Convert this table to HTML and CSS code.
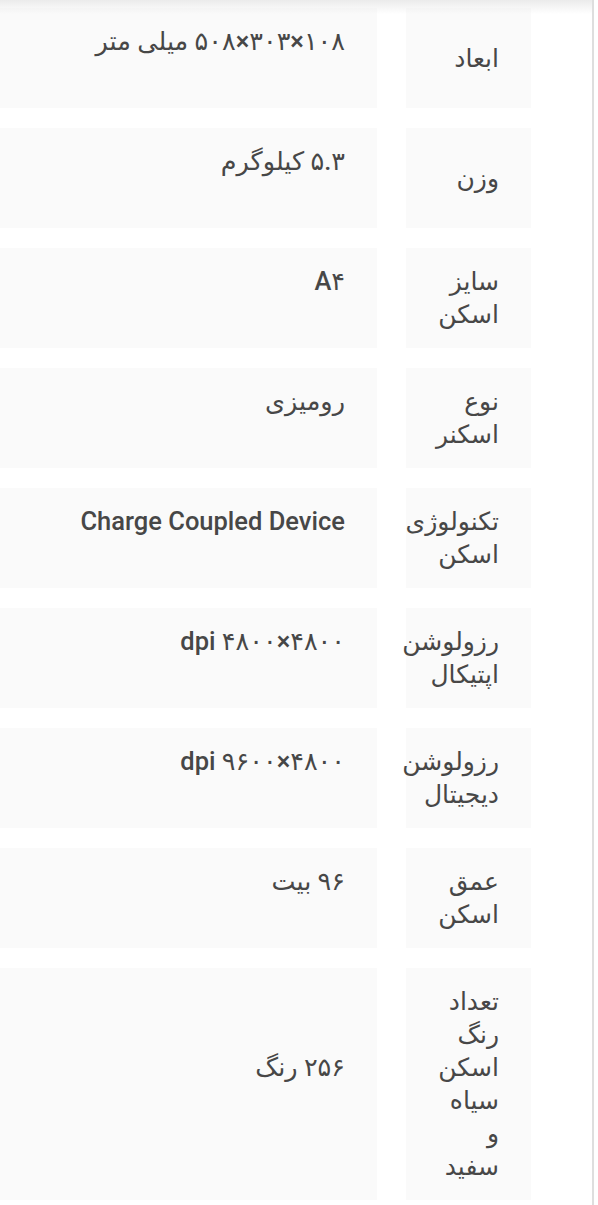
FILE: index.html
```html
<!DOCTYPE html>
<html lang="fa">
<head>
<meta charset="utf-8">
<title>مشخصات</title>
<link rel="stylesheet" href="styles.css">
</head>
<body>
<div class="viewport">
  <div class="top-shade"></div>
  <div class="specs" dir="rtl">
    <div class="row">
      <div class="label"><span>ابعاد</span></div>
      <div class="value"><p><span dir="ltr">۵۰۸×۳۰۳×۱۰۸</span> میلی متر</p></div>
    </div>
    <div class="row">
      <div class="label"><span>وزن</span></div>
      <div class="value"><p>۵.۳ کیلوگرم</p></div>
    </div>
    <div class="row">
      <div class="label"><span>سایز اسکن</span></div>
      <div class="value"><p>A۴</p></div>
    </div>
    <div class="row">
      <div class="label"><span>نوع اسکنر</span></div>
      <div class="value"><p>رومیزی</p></div>
    </div>
    <div class="row">
      <div class="label"><span>تکنولوژی اسکن</span></div>
      <div class="value"><p>Charge Coupled Device</p></div>
    </div>
    <div class="row">
      <div class="label"><span>رزولوشن اپتیکال</span></div>
      <div class="value"><p><span dir="ltr">dpi ۴۸۰۰×۴۸۰۰</span></p></div>
    </div>
    <div class="row">
      <div class="label"><span>رزولوشن دیجیتال</span></div>
      <div class="value"><p><span dir="ltr">dpi ۹۶۰۰×۴۸۰۰</span></p></div>
    </div>
    <div class="row">
      <div class="label"><span>عمق اسکن</span></div>
      <div class="value"><p>۹۶ بیت</p></div>
    </div>
    <div class="row">
      <div class="label"><span>تعداد رنگ اسکن سیاه و سفید</span></div>
      <div class="value"><p>۲۵۶ رنگ</p></div>
    </div>
  </div>
</div>
</body>
</html>
```

FILE: styles.css
```css
html, body {
  margin: 0;
  padding: 0;
  background: #ffffff;
}

body {
  font-family: Roboto, "DejaVu Sans", sans-serif;
  color: #474747;
}

.viewport {
  position: relative;
  width: 594px;
  height: 1205px;
  overflow: hidden;
  border-right: 2px solid #dedede;
  padding-top: 8px;
  box-sizing: border-box;
}

.top-shade {
  position: absolute;
  top: 0;
  left: 0;
  right: 0;
  height: 14px;
  background: linear-gradient(to bottom, #ebebeb, rgba(255, 255, 255, 0));
  z-index: 2;
}

.specs {
  display: flex;
  flex-direction: column;
  gap: 20px;
  padding-right: 61px;
}

.row {
  display: flex;
  gap: 29px;
}

.label,
.value {
  background: #fafafa;
  display: flex;
  align-items: center;
  padding: 17px 32px;
  box-sizing: border-box;
  line-height: 33px;
}

.label {
  flex: 0 0 125px;
  width: 125px;
  font-size: 25px;
}

.label span {
  display: block;
  width: 100%;
}

.value {
  flex: 0 0 460px;
  width: 460px;
  font-size: 25.5px;
  font-weight: 500;
}

.value p {
  margin: 0 0 33px 0;
  white-space: nowrap;
}
```
